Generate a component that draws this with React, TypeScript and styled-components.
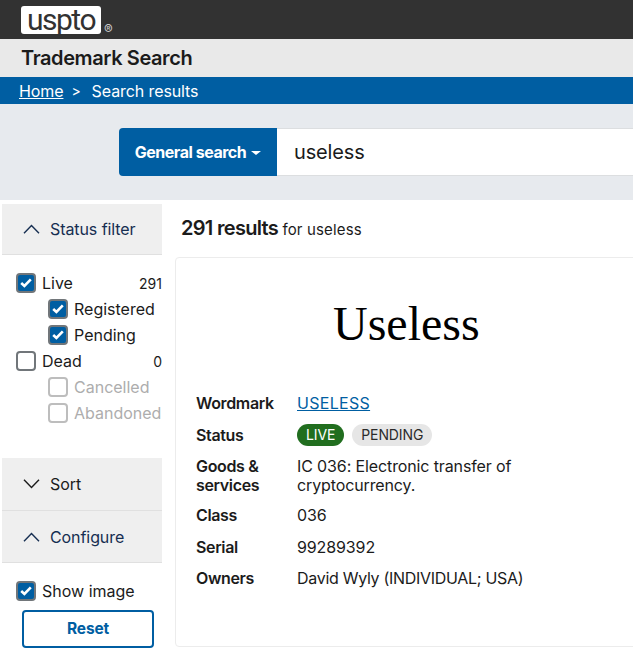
import React from "react";
import styled, { createGlobalStyle } from "styled-components";

const FONT = `Inter, "Liberation Sans", Arial, sans-serif`;

const GlobalStyle = createGlobalStyle`
  html, body {
    margin: 0;
    padding: 0;
    background: #fff;
    overflow: hidden;
  }
  * { box-sizing: border-box; }
`;

const Page = styled.div`
  width: 633px;
  height: 648px;
  overflow: hidden;
  font-family: ${FONT};
  font-size: 16px;
  color: #1b1b1b;
`;

const TopBar = styled.div`
  height: 39px;
  background: #323232;
  padding: 6px 0 0 21px;
  display: flex;
  align-items: flex-start;
`;

const LogoBox = styled.div`
  width: 80px;
  height: 28px;
  background: #fff;
  border-radius: 3px;
  color: #323232;
  font-family: Roboto, ${FONT};
  font-size: 30px;
  line-height: 27px;
  font-weight: 400;
  letter-spacing: -1.5px;
  text-align: center;
`;

const Registered = styled.span`
  color: #c8c8c8;
  font-size: 13px;
  line-height: 13px;
  margin: 17px 0 0 3px;
`;

const TitleBar = styled.div`
  height: 38px;
  background: #e9e9e9;
  padding-left: 21px;
  font-size: 20px;
  font-weight: 600;
  line-height: 38px;
  letter-spacing: -0.4px;
`;

const Crumbs = styled.nav`
  height: 27px;
  background: #005ea2;
  color: #fff;
  padding-left: 19px;
  display: flex;
  align-items: center;
  font-size: 16px;
  letter-spacing: -0.1px;
`;

const CrumbLink = styled.a`
  color: #fff;
  text-decoration: underline;
`;

const CrumbSep = styled.span`
  margin: 0 11px 0 8px;
  font-size: 14px;
`;

const SearchBand = styled.div`
  height: 96px;
  background: #e7eaee;
  padding: 24px 0 0 119px;
  display: flex;
  align-items: flex-start;
`;

const SearchType = styled.div`
  width: 158px;
  height: 48px;
  flex: none;
  background: #005ea2;
  border-radius: 4px 0 0 4px;
  color: #fff;
  font-size: 16px;
  font-weight: 700;
  letter-spacing: -0.47px;
  display: flex;
  align-items: center;
  justify-content: center;
  gap: 5px;
`;

const Caret = styled.span`
  width: 0;
  height: 0;
  margin-top: 2px;
  border-left: 5px solid transparent;
  border-right: 5px solid transparent;
  border-top: 4px solid #fff;
`;

const SearchInput = styled.div`
  width: 500px;
  height: 48px;
  flex: none;
  background: #fff;
  border: 1px solid #dcdee0;
  border-left: none;
  padding-left: 17px;
  font-size: 20px;
  line-height: 47px;
  letter-spacing: -0.15px;
`;

const Body = styled.div`
  display: flex;
  padding-left: 2px;
`;

const Sidebar = styled.aside`
  width: 160px;
  flex: none;
  padding-top: 4px;
`;

const PanelHead = styled.div<{ $open?: boolean; $height: number }>`
  height: ${(p) => p.$height}px;
  background: #efefef;
  border-bottom: 1px solid #e0e0e0;
  padding-left: 21px;
  display: flex;
  align-items: center;
  gap: 10px;
  font-size: 16px;
  letter-spacing: -0.08px;
  color: ${(p) => (p.$open ? "#162e51" : "#1b1b1b")};
`;

const Chevron = styled.svg`
  width: 17px;
  height: 10px;
  flex: none;
  fill: none;
  stroke: currentColor;
  stroke-width: 1.4;
`;

const FilterList = styled.div`
  height: 203px;
  padding-top: 15px;
`;

const CheckRow = styled.div<{ $nested?: boolean; $muted?: boolean }>`
  height: 26px;
  display: flex;
  align-items: center;
  padding-left: ${(p) => (p.$nested ? "46px" : "14px")};
  font-size: 16px;
  color: ${(p) => (p.$muted ? "#adadad" : "#1b1b1b")};
`;

const Box = styled.span<{ $checked?: boolean; $muted?: boolean }>`
  width: 20px;
  height: 20px;
  flex: none;
  margin-right: 6px;
  border-radius: 4px;
  border: 2px solid ${(p) => (p.$muted ? "#bdbdbd" : "#71767a")};
  background: ${(p) => (p.$checked ? "#005ea2" : "#fff")};
  display: flex;
  align-items: center;
  justify-content: center;
`;

const CheckMark = styled.svg`
  width: 12px;
  height: 10px;
  fill: none;
  stroke: #fff;
  stroke-width: 2.6;
`;

const Count = styled.span`
  margin-left: auto;
  font-size: 14px;
`;

const ConfigBody = styled.div`
  padding-top: 15px;
`;

const ResetButton = styled.div`
  width: 132px;
  height: 38px;
  margin: 6px 0 0 20px;
  border: 2px solid #005ea2;
  border-radius: 4px;
  padding-bottom: 1px;
  color: #005ea2;
  font-size: 15.5px;
  font-weight: 700;
  letter-spacing: -0.2px;
  display: flex;
  align-items: center;
  justify-content: center;
`;

const Results = styled.main`
  flex: none;
  width: 600px;
  padding-left: 13px;
`;

const ResultCount = styled.div`
  height: 57px;
  padding: 15px 0 0 6px;
  font-size: 15px;
  line-height: 26px;
  letter-spacing: 0.15px;
`;

const CountStrong = styled.strong`
  font-size: 20px;
  font-weight: 600;
  letter-spacing: -0.7px;
`;

const Card = styled.article`
  width: 600px;
  height: 390px;
  border: 1px solid #ececec;
  border-radius: 4px;
  padding: 0 0 0 20px;
`;

const MarkImage = styled.div`
  width: 420px;
  height: 129px;
  padding-top: 35px;
  font-family: "Liberation Serif", "Times New Roman", serif;
  font-size: 48px;
  line-height: 62px;
  color: #000;
  padding-left: 137px;
`;

const Fields = styled.dl`
  margin: 0;
  display: grid;
  grid-template-columns: 101px 240px;
  grid-template-rows: 32px 32px 48px 32px 32px 31px;
  align-items: center;
`;

const Label = styled.dt<{ $drop?: boolean }>`
  font-size: 16px;
  font-weight: 600;
  line-height: 19px;
  letter-spacing: -0.35px;
  padding-top: ${(p) => (p.$drop ? "2px" : "0")};
`;

const Value = styled.dd<{ $drop?: boolean; $tight?: boolean }>`
  margin: 0;
  font-size: 16px;
  line-height: 19px;
  letter-spacing: ${(p) => (p.$tight ? "-0.3px" : "-0.12px")};
  padding-top: ${(p) => (p.$drop ? "2px" : "0")};
  display: flex;
  align-items: center;
  white-space: nowrap;
`;

const ValueLines = styled.div``;

const WordLink = styled.a`
  color: #005ea2;
  text-decoration: underline;
  letter-spacing: 0.3px;
`;

const Pill = styled.span<{ $live?: boolean }>`
  height: 22px;
  padding: 0 9px;
  margin-right: 8px;
  border-radius: 11px;
  font-size: 14px;
  line-height: 22px;
  background: ${(p) => (p.$live ? "#216e1f" : "#e6e6e6")};
  color: ${(p) => (p.$live ? "#fff" : "#2b2b2b")};
`;

const ChevronUp = () => (
  <Chevron viewBox="0 0 17 10">
    <path d="M1 9.2 8.5 1.6 16 9.2" />
  </Chevron>
);

const ChevronDown = () => (
  <Chevron viewBox="0 0 17 10">
    <path d="M1 .8 8.5 8.4 16 .8" />
  </Chevron>
);

type CheckProps = {
  label: string;
  checked?: boolean;
  nested?: boolean;
  muted?: boolean;
  count?: number;
};

const Check: React.FC<CheckProps> = ({ label, checked, nested, muted, count }) => (
  <CheckRow $nested={nested} $muted={muted}>
    <Box $checked={checked} $muted={muted}>
      {checked && (
        <CheckMark viewBox="0 0 12 10">
          <path d="M1.2 5 4.4 8 10.8 1.4" />
        </CheckMark>
      )}
    </Box>
    {label}
    {count !== undefined && <Count>{count}</Count>}
  </CheckRow>
);

export default function App() {
  return (
    <Page>
      <GlobalStyle />
      <TopBar>
        <LogoBox>uspto</LogoBox>
        <Registered>®</Registered>
      </TopBar>
      <TitleBar>Trademark Search</TitleBar>
      <Crumbs>
        <CrumbLink>Home</CrumbLink>
        <CrumbSep>&gt;</CrumbSep>
        Search results
      </Crumbs>
      <SearchBand>
        <SearchType>
          General search
          <Caret />
        </SearchType>
        <SearchInput>useless</SearchInput>
      </SearchBand>
      <Body>
        <Sidebar>
          <PanelHead $open $height={51}>
            <ChevronUp />
            Status filter
          </PanelHead>
          <FilterList>
            <Check label="Live" checked count={291} />
            <Check label="Registered" checked nested />
            <Check label="Pending" checked nested />
            <Check label="Dead" count={0} />
            <Check label="Cancelled" nested muted />
            <Check label="Abandoned" nested muted />
          </FilterList>
          <PanelHead $height={53}>
            <ChevronDown />
            Sort
          </PanelHead>
          <PanelHead $open $height={52}>
            <ChevronUp />
            Configure
          </PanelHead>
          <ConfigBody>
            <Check label="Show image" checked />
            <ResetButton>Reset</ResetButton>
          </ConfigBody>
        </Sidebar>
        <Results>
          <ResultCount>
            <CountStrong>291 results</CountStrong> for useless
          </ResultCount>
          <Card>
            <MarkImage>Useless</MarkImage>
            <Fields>
              <Label>Wordmark</Label>
              <Value>
                <WordLink>USELESS</WordLink>
              </Value>
              <Label>Status</Label>
              <Value>
                <Pill $live>LIVE</Pill>
                <Pill>PENDING</Pill>
              </Value>
              <Label $drop>
                Goods &amp;
                <br />
                services
              </Label>
              <Value $drop>
                <ValueLines>
                  IC 036: Electronic transfer of
                  <br />
                  cryptocurrency.
                </ValueLines>
              </Value>
              <Label>Class</Label>
              <Value>036</Value>
              <Label>Serial</Label>
              <Value>99289392</Value>
              <Label>Owners</Label>
              <Value $tight>David Wyly (INDIVIDUAL; USA)</Value>
            </Fields>
          </Card>
        </Results>
      </Body>
    </Page>
  );
}
